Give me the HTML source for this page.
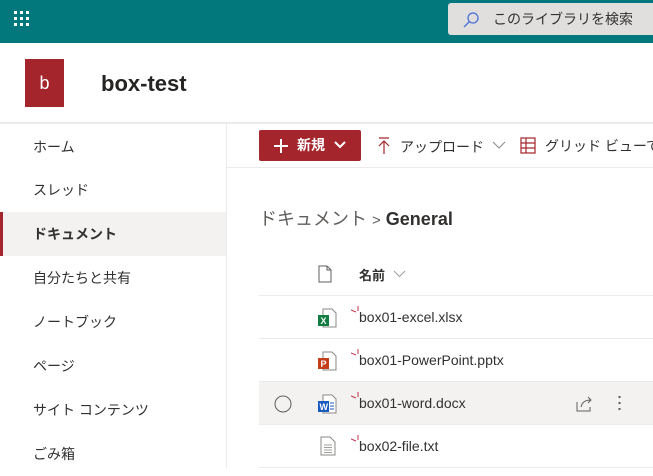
<!DOCTYPE html>
<html><head><meta charset="utf-8"><style>
*{margin:0;padding:0;box-sizing:border-box}
body{width:653px;height:468px;overflow:hidden;background:#fff;font-family:"Liberation Sans","Noto Sans CJK JP",sans-serif;color:#323130;position:relative}
.a{position:absolute}
.top{left:0;top:0;width:653px;height:43px;background:#03787c}
.search{left:448px;top:3px;width:210px;height:32px;background:#e1dfdd;border-radius:3px;font-size:14px;line-height:32px;padding-left:45px;color:#323130}
.nav div{position:absolute;left:0;width:226px;height:44px;line-height:44px;padding-left:33px;font-size:14px}
.row{position:absolute;left:259px;width:394px;height:43px;border-bottom:1px solid #edebe9}
.fn{position:absolute;left:100px;top:13px;font-size:14px;color:#323130}
.mark{position:absolute;left:92px;top:6px;width:9px;height:9px}
</style></head><body>
<div class="a top"></div>
<svg class="a" style="left:14px;top:11px" width="18" height="18" viewBox="0 0 18 18" fill="#fff"><g><rect x="0" y="0" width="3" height="3"/><rect x="6" y="0" width="3" height="3"/><rect x="12" y="0" width="3" height="3"/><rect x="0" y="6" width="3" height="3"/><rect x="6" y="6" width="3" height="3"/><rect x="12" y="6" width="3" height="3"/><rect x="0" y="12" width="3" height="3"/><rect x="6" y="12" width="3" height="3"/><rect x="12" y="12" width="3" height="3"/></g></svg>
<div class="a search">このライブラリを検索</div>
<svg class="a" style="left:462px;top:11px" width="18" height="18" viewBox="0 0 18 18" fill="none" stroke="#4a6fd8" stroke-width="1.3"><circle cx="11" cy="7" r="5"/><path d="M7.5 10.5L2 16"/></svg>
<div class="a" style="left:25px;top:59px;width:39px;height:48px;background:#a4262c;color:#fff;font-size:18px;text-align:center;line-height:48px">b</div>
<div class="a" style="left:101px;top:71px;font-size:22px;font-weight:600;color:#252423">box-test</div>
<div class="a" style="left:0;top:122px;width:653px;height:2px;background:#edebe9"></div>
<div class="a" style="left:226px;top:124px;width:1px;height:344px;background:#edebe9"></div>
<div class="nav">
<div style="top:125px">ホーム</div>
<div style="top:168px">スレッド</div>
<div style="top:212px;background:#f3f2f1;font-weight:bold;border-left:3px solid #a4262c;padding-left:30px">ドキュメント</div>
<div style="top:256px">自分たちと共有</div>
<div style="top:300px">ノートブック</div>
<div style="top:344px">ページ</div>
<div style="top:388px">サイト コンテンツ</div>
<div style="top:432px">ごみ箱</div>
</div>
<div class="a" style="left:227px;top:167px;width:426px;height:1px;background:#edebe9"></div>
<div class="a" style="left:259px;top:130px;width:102px;height:31px;background:#a4262c;border-radius:2px;color:#fff;font-size:14px;font-weight:bold;line-height:31px;padding-left:38px">新規</div>
<svg class="a" style="left:273px;top:138px" width="16" height="16" viewBox="0 0 16 16" stroke="#fff" stroke-width="2"><path d="M8 1v14M1 8h14"/></svg>
<svg class="a" style="left:333px;top:140px" width="14" height="10" viewBox="0 0 14 10" fill="none" stroke="#fff" stroke-width="2"><path d="M2 2l5 5 5-5"/></svg>
<svg class="a" style="left:377px;top:137px" width="14" height="18" viewBox="0 0 14 18" fill="none" stroke="#a4262c" stroke-width="1.2"><path d="M2 1h10M7 17V4M2 9l5-5 5 5"/></svg>
<div class="a" style="left:400px;top:137px;font-size:14px">アップロード</div>
<svg class="a" style="left:492px;top:141px" width="14" height="9" viewBox="0 0 14 9" fill="none" stroke="#8a8886" stroke-width="1"><path d="M1 1l6 6 6-6"/></svg>
<svg class="a" style="left:520px;top:137px" width="16" height="17" viewBox="0 0 16 17" fill="none" stroke="#a4262c" stroke-width="1.2"><rect x="1" y="1" width="14" height="15"/><path d="M1 6h14M1 11h14M6 1v15"/></svg>
<div class="a" style="left:545px;top:136px;font-size:14px;white-space:nowrap">グリッド ビューで</div>
<div class="a" style="left:259px;top:205px;font-size:18px;color:#605e5c;white-space:nowrap">ドキュメント <span style="font-size:15px">&gt;</span> <b style="color:#323130;font-weight:600">General</b></div>
<svg class="a" style="left:318px;top:265px" width="14" height="18" viewBox="0 0 14 18" fill="none" stroke="#605e5c" stroke-width="1"><path d="M1 1h8l4 4v12H1z M9 1v4h4"/></svg>
<div class="a" style="left:359px;top:265px;font-size:13px;font-weight:bold">名前</div>
<svg class="a" style="left:393px;top:270px" width="13" height="8" viewBox="0 0 13 8" fill="none" stroke="#a19f9d"><path d="M1 1l5.5 5.5L12 1"/></svg>
<div class="a" style="left:259px;top:295px;width:394px;height:1px;background:#edebe9"></div>
<div class="row" style="top:296px"><svg class="a" style="left:59px;top:12px" width="20" height="20" viewBox="0 0 20 20"><path d="M5 1h9l4 4v14H5z" fill="#fff" stroke="#8a8886"/><rect x="0" y="7" width="11" height="11" fill="#107c41"/><text x="2.5" y="16" font-size="9" fill="#fff" font-weight="bold" font-family="Liberation Sans">X</text></svg><div class="mark"><svg width="9" height="9"><path d="M0 4l5 2M7 0v5" stroke="#c4314b" stroke-width="1"/></svg></div><div class="fn">box01-excel.xlsx</div></div>
<div class="row" style="top:339px"><svg class="a" style="left:59px;top:12px" width="20" height="20" viewBox="0 0 20 20"><path d="M5 1h9l4 4v14H5z" fill="#fff" stroke="#8a8886"/><rect x="0" y="7" width="11" height="11" fill="#c43e1c"/><text x="2.5" y="16" font-size="9" fill="#fff" font-weight="bold" font-family="Liberation Sans">P</text></svg><div class="mark"><svg width="9" height="9"><path d="M0 4l5 2M7 0v5" stroke="#c4314b" stroke-width="1"/></svg></div><div class="fn">box01-PowerPoint.pptx</div></div>
<div class="row" style="top:382px;background:#f3f2f1"><svg class="a" style="left:15px;top:13px" width="18" height="18"><circle cx="9" cy="9" r="8" fill="none" stroke="#605e5c"/></svg><svg class="a" style="left:59px;top:12px" width="20" height="20" viewBox="0 0 20 20"><path d="M5 1h9l4 4v14H5z" fill="#fff" stroke="#8a8886"/><path d="M12 9h4M12 12h4M12 15h4" stroke="#185abd"/><rect x="0" y="7" width="11" height="11" fill="#185abd"/><text x="1.5" y="16" font-size="9" fill="#fff" font-weight="bold" font-family="Liberation Sans">W</text></svg><div class="mark"><svg width="9" height="9"><path d="M0 4l5 2M7 0v5" stroke="#c4314b" stroke-width="1"/></svg></div><div class="fn">box01-word.docx</div>
<svg class="a" style="left:317px;top:13px" width="18" height="17" viewBox="0 0 18 17" fill="none" stroke="#605e5c"><path d="M1 7v9h13v-4M5 12c1-5 5-7 10-7M12 2l3 3-3 3"/></svg>
<div class="a" style="left:359px;top:12px;width:3px;height:18px;background:radial-gradient(circle,#605e5c 1.1px,transparent 1.3px) 0 0/3px 6px"></div></div>
<div class="row" style="top:425px"><svg class="a" style="left:61px;top:11px" width="16" height="20" viewBox="0 0 16 20" fill="none" stroke="#8a8886"><path d="M1 1h9l5 5v13H1z"/><path d="M4 9h8M4 11.5h8M4 14h8M4 16.5h8" stroke="#a19f9d"/></svg><div class="mark"><svg width="9" height="9"><path d="M0 4l5 2M7 0v5" stroke="#c4314b" stroke-width="1"/></svg></div><div class="fn">box02-file.txt</div></div>
</body></html>
